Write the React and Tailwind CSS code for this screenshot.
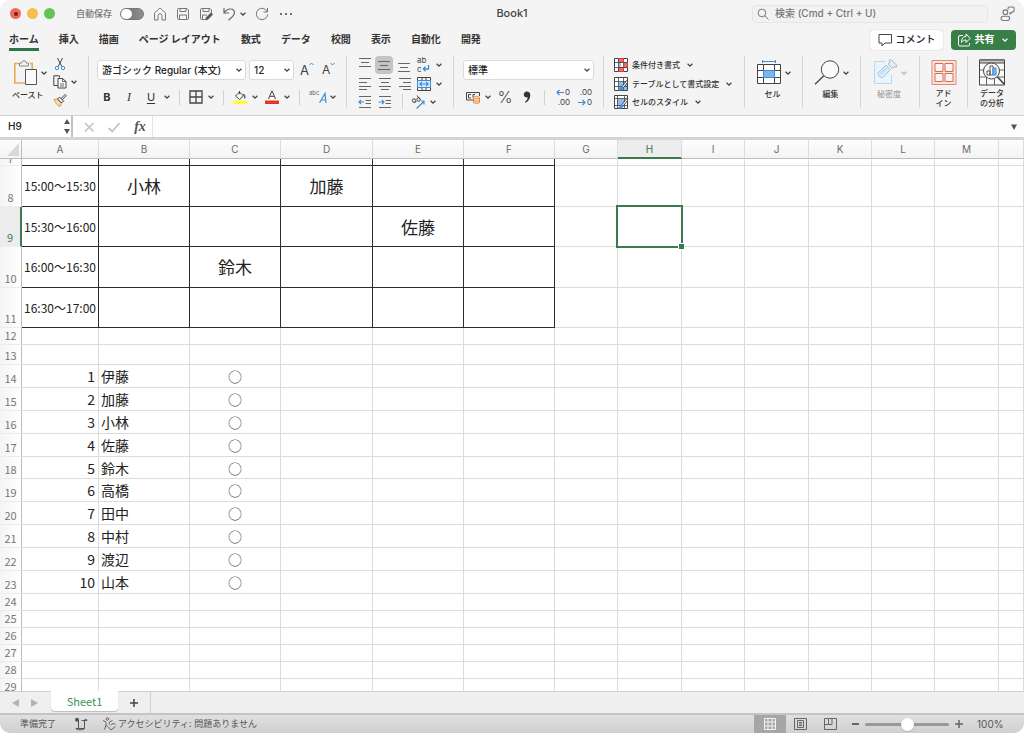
import { useState } from "react";
import clsx from "clsx";

const BLUE = "#3b8ede";
const INK = "#444";

const tabs = ["ホーム", "挿入", "描画", "ページ レイアウト", "数式", "データ", "校閲", "表示", "自動化", "開発"];

const columns = [
  { name: "A", width: "w-[77px]" },
  { name: "B", width: "w-[91px]" },
  { name: "C", width: "w-[91px]" },
  { name: "D", width: "w-[92px]" },
  { name: "E", width: "w-[91px]" },
  { name: "F", width: "w-[91px]" },
  { name: "G", width: "w-[63px]" },
  { name: "H", width: "w-[64px]" },
  { name: "I", width: "w-[63px]" },
  { name: "J", width: "w-[64px]" },
  { name: "K", width: "w-[63px]" },
  { name: "L", width: "w-[63px]" },
  { name: "M", width: "w-[64px]" },
  { name: "", width: "" },
];

const names = ["伊藤", "加藤", "小林", "佐藤", "鈴木", "高橋", "田中", "中村", "渡辺", "山本"];

const rows = [
  { n: 7, h: "h-[7px]", boxed: true, cells: {} },
  { n: 8, h: "h-[41px]", boxed: true, cells: { A: "15:00～15:30", B: "小林", D: "加藤" } },
  { n: 9, h: "h-[40px]", boxed: true, cells: { A: "15:30～16:00", E: "佐藤" } },
  { n: 10, h: "h-[41px]", boxed: true, cells: { A: "16:00～16:30", C: "鈴木" } },
  { n: 11, h: "h-[40px]", boxed: true, cells: { A: "16:30～17:00" } },
  { n: 12, h: "h-[17px]", cells: {} },
  { n: 13, h: "h-[20px]", cells: {} },
  ...names.map((name, i) => ({
    n: 14 + i,
    h: i === 4 ? "h-[22px]" : "h-[23px]",
    cells: { A: i + 1, B: name, C: "○" },
  })),
  ...[24, 25, 26, 27, 28, 29].map((n) => ({ n, h: "h-[17px]", cells: {} })),
];

function Chevron({ color = "#444" }) {
  return (
    <svg viewBox="0 0 12 12" className="h-3 w-3 shrink-0" fill="none" stroke={color} strokeWidth="1.3">
      <path d="M3.6 4.8 6 7.2l2.4-2.4" />
    </svg>
  );
}

function Icon({ size = "h-[14px] w-[14px]", box = "0 0 14 14", children }) {
  return (
    <svg viewBox={box} className={clsx("shrink-0", size)} fill="none" stroke={INK} strokeWidth="1">
      {children}
    </svg>
  );
}

function Split({ label, children }) {
  return (
    <button aria-label={label} className="flex h-5 items-center gap-0.5">
      {children}
      <Chevron />
    </button>
  );
}

function Sep() {
  return <span className="ml-1.5 mr-[9px] h-[15px] w-px bg-[#d2d2d2]" />;
}

function Group({ className, children }) {
  return <section className={clsx("shrink-0 border-r border-[#d6d6d6]", className)}>{children}</section>;
}

function Dropdown({ label, value, className }) {
  return (
    <label className={clsx("relative flex h-5 items-center rounded-[3px] border border-[#dadada] bg-white", className)}>
      <select aria-label={label} className="h-full w-full appearance-none bg-transparent pl-1 text-[10px] font-medium text-[#222] outline-none">
        <option>{value}</option>
      </select>
      <span className="pointer-events-none absolute right-0">
        <Chevron />
      </span>
    </label>
  );
}

function TitleBar() {
  return (
    <header className="grid h-[27px] shrink-0 grid-cols-[1fr_auto_1fr] items-center">
      <div className="flex items-center pl-[10px]">
        <div className="flex gap-1.5">
          <button aria-label="閉じる" className="flex h-[11px] w-[11px] items-center justify-center rounded-full bg-[#ed6a5e]">
            <span className="h-1 w-1 rounded-full bg-[#7d1c14]" />
          </button>
          <button aria-label="しまう" className="h-[11px] w-[11px] rounded-full bg-[#f5bf4f]" />
          <button aria-label="拡大" className="h-[11px] w-[11px] rounded-full bg-[#61c554]" />
        </div>
        <label className="ml-[21px] flex items-center gap-2 text-[9px] font-medium text-[#777]">
          自動保存
          <input type="checkbox" className="peer sr-only" />
          <span className="flex h-3 w-6 items-center rounded-full border border-[#777] bg-linear-to-r from-[#6e6e6e] to-[#8f8f8f]">
            <span className="h-[10px] w-[11px] rounded-full bg-white" />
          </span>
        </label>
        <div className="ml-[9px] flex items-center gap-[9px]">
          <button aria-label="ホーム">
            <Icon>
              <path stroke="#777" d="M1.5 6 7 1l5.5 5v7H9V8.700a2 2 0 0 0-4 0V13H1.5z" strokeLinejoin="round" />
            </Icon>
          </button>
          <button aria-label="保存">
            <Icon>
              <path stroke="#777" d="M1.5 2.5a1 1 0 0 1 1-1H11l1.5 1.5v8.5a1 1 0 0 1-1 1h-9a1 1 0 0 1-1-1zM4 1.500v3h6v-3M3.5 12.500V8h7v4.500" />
            </Icon>
          </button>
          <button aria-label="名前を付けて保存">
            <Icon>
              <path stroke="#777" d="M6 12.500H2.500a1 1 0 0 1-1-1v-9a1 1 0 0 1 1-1H11l1.500 1.500v3M4 1.500v3h6v-3M3.500 12.500V8H8" />
              <path fill="#555" stroke="#555" strokeWidth="0.6" d="m6.500 13 .7-2.600L12 5.800l1.700 1.700-4.600 4.800z" />
            </Icon>
          </button>
          <button aria-label="元に戻す" className="flex items-center">
            <Icon>
              <path stroke="#666" strokeWidth="1.2" d="M2 1v5h5M2.200 5.800C4 3 6 2 8.200 2c2.600 0 4.300 1.500 4.300 3.800 0 2.700-2.500 4.700-6 7.500" />
            </Icon>
            <span className="w-px" />
            <Chevron />
          </button>
          <button aria-label="繰り返し" className="-ml-[3px]">
            <Icon>
              <path stroke="#777" d="M12.500 1v4h-4M12.300 4.800A5.700 5.700 0 1 0 12.700 7.500" />
            </Icon>
          </button>
          <button aria-label="その他" className="flex gap-[3px] pl-0.5">
            <span className="h-0.5 w-0.5 rounded-full bg-[#444]" />
            <span className="h-0.5 w-0.5 rounded-full bg-[#444]" />
            <span className="h-0.5 w-0.5 rounded-full bg-[#444]" />
          </button>
        </div>
      </div>
      <h1 className="text-[11px] font-medium text-[#444]">Book1</h1>
      <div className="flex items-center justify-end gap-3 pr-[9px]">
        <label className="flex h-[18px] w-[236px] items-center gap-1.5 rounded border border-[#e6e6e6] bg-[#f2f2f2] pl-1">
          <Icon size="h-3 w-3">
            <circle cx="5.8" cy="5.8" r="4.500" stroke="#666" />
            <path stroke="#666" d="m9 9 4.500 4.500" />
          </Icon>
          <input
            aria-label="検索"
            placeholder="検索 (Cmd + Ctrl + U)"
            className="w-full bg-transparent text-[10px] font-medium outline-none placeholder:text-[#777]"
          />
        </label>
        <button aria-label="プレゼンス">
          <Icon size="h-[15px] w-[15px]">
            <circle cx="5" cy="5.800" r="2.200" stroke="#777" />
            <rect x="1" y="9.500" width="8" height="4" rx="2" stroke="#777" />
            <path stroke="#777" d="M7.500 3.500V2a1 1 0 0 1 1-1h3.700a1 1 0 0 1 1 1v2.500a1 1 0 0 1-1 1h-.700L9.500 7.500v-2" />
          </Icon>
        </button>
      </div>
    </header>
  );
}

function TabBar() {
  const [active, setActive] = useState("ホーム");
  return (
    <nav className="flex h-[25px] shrink-0 items-center pl-[9px] pr-2">
      <div className="flex flex-1 gap-5">
        {tabs.map((tab) => (
          <button
            key={tab}
            onClick={() => setActive(tab)}
            className={clsx(
              "h-[23px] whitespace-nowrap border-b-[3px] pt-0.5 text-[10px] font-bold leading-4 text-[#333]",
              active === tab ? "border-[#2f7549]" : "border-transparent"
            )}
          >
            {tab}
          </button>
        ))}
      </div>
      <div className="flex gap-2">
        <button className="flex h-5 w-[73px] items-center justify-center gap-1 rounded bg-white text-[10px] font-medium text-[#222] shadow-[0_0_1px_#999]">
          <Icon>
            <path d="M1 1.500h12.500v8.500H7l-3 3v-3H1z" strokeLinejoin="round" />
          </Icon>
          コメント
        </button>
        <button className="flex h-5 w-[65px] items-center justify-center gap-1 rounded bg-[#377e47] text-[10px] font-bold text-white">
          <Icon>
            <path stroke="#fff" d="M6 2.500H3A1.500 1.500 0 0 0 1.500 4v7.500A1.500 1.500 0 0 0 3 13h8a1.500 1.500 0 0 0 1.500-1.500V10" />
            <path stroke="#fff" strokeLinejoin="round" d="M9 1v2.500C6 3.500 4.500 6 4.500 9.500 6 7.500 7 7 9 7v2.500L13.300 5.200z" />
          </Icon>
          共有
          <Chevron color="#fff" />
        </button>
      </div>
    </nav>
  );
}

function ClipboardGroup() {
  return (
    <Group className="flex w-[89px] pl-3">
      <div className="w-9">
        <div className="flex h-[33px] items-center">
          <button aria-label="貼り付け">
            <Icon size="h-[27px] w-[26px]" box="0 0 26 27">
              <path stroke="#eba95c" strokeWidth="1.600" d="M7 4.500H2.800V24H13M18 4.500h2.200V10" />
              <path fill="#f4f4f4" stroke="#888" d="M7.500 7V4h2.300a2 2 0 0 1 4.400 0h2.300v3z" />
              <path fill="#fafafa" stroke="#555" d="M13.500 10.500h11v15h-11z" />
            </Icon>
          </button>
          <Chevron />
        </div>
        <span className="block whitespace-nowrap text-[8px] font-medium leading-3">ペースト</span>
      </div>
      <div className="ml-[5px] flex flex-col gap-0.5">
        <button aria-label="切り取り" className="h-4">
          <Icon>
            <path d="m4.500 1 4.300 8.500M9.500 1 5.200 9.500" />
            <circle cx="4" cy="11" r="1.700" stroke={BLUE} />
            <circle cx="10" cy="11" r="1.700" stroke={BLUE} />
          </Icon>
        </button>
        <button aria-label="コピー" className="flex h-4 items-center gap-px">
          <Icon>
            <path d="M5 10.500H.8V.8h5.700v1.700" />
            <path fill="#fafafa" d="M5 3.500h4.500l3.500 3V13H5z" />
            <path d="M9.500 3.500v3H13M7 9h4M7 11h4" strokeWidth="0.800" />
          </Icon>
          <Chevron />
        </button>
        <button aria-label="書式のコピー" className="h-4">
          <Icon>
            <path stroke="#e8973a" fill="#f9d9b0" d="m1 6.500 3-.5 4.500 4.500L7 13.500C4 12 2 9.500 1 6.500z" />
            <path fill="#f4f4f4" d="m4.500 6 2-2 4 4-2 2z" />
            <path d="m8 5.500 4-4 1.200 1.200-4 4" />
          </Icon>
        </button>
      </div>
    </Group>
  );
}

function FontGroup() {
  return (
    <Group className="w-[258px] pl-2 pt-1">
      <div className="flex items-center">
        <Dropdown label="フォント" value="游ゴシック Regular (本文)" className="w-[149px]" />
        <Dropdown label="フォント サイズ" value="12" className="ml-[3px] w-[45px]" />
        <button aria-label="フォント サイズの拡大" className="ml-1.5 flex text-[13px] leading-5 text-[#444]">
          A
          <Icon size="h-2 w-[5px]" box="0 0 5 8">
            <path stroke={BLUE} d="m.5 5 2-2 2 2" />
          </Icon>
        </button>
        <button aria-label="フォント サイズの縮小" className="ml-2 flex text-[12px] leading-5 text-[#444]">
          A
          <Icon size="h-2 w-[5px]" box="0 0 5 8">
            <path stroke={BLUE} d="m.5 3 2 2 2-2" />
          </Icon>
        </button>
      </div>
      <div className="mt-[7px] flex items-center text-[11px] text-[#333]">
        <button className="w-5 font-bold">B</button>
        <button className="ml-0.5 w-5 font-['Liberation_Serif',serif] text-[12px] italic">I</button>
        <button className="ml-0.5 flex h-5 items-center">
          <span className="w-5 underline underline-offset-2">U</span>
          <Chevron />
        </button>
        <Sep />
        <Split label="罫線">
          <Icon>
            <path strokeWidth="1.300" d="M1 1h12v12H1zM7 1v12M1 7h12" />
          </Icon>
        </Split>
        <Sep />
        <Split label="塗りつぶしの色">
          <Icon>
            <path d="M6.500 1v3M2.500 6 6.500 2l4 4-4 3.500z" />
            <path stroke="#2b6cb8" strokeWidth="1.500" d="M10 4.500c1.500 0 2 1.500 1.700 4" />
            <path fill="#fffb3f" stroke="none" d="M0 10.500h14V14H0z" />
          </Icon>
        </Split>
        <span className="w-1" />
        <Split label="フォントの色">
          <Icon>
            <path d="m3.500 9 3.500-8.200L10.500 9M4.700 6.300h4.600" />
            <path fill="#ea3323" stroke="none" d="M0 10.500h14V14H0z" />
          </Icon>
        </Split>
        <Sep />
        <button aria-label="ふりがな" className="flex h-5 items-center">
          <span className="self-start text-[6px] leading-3 text-[#666]">abc</span>
          <Icon size="h-3 w-2" box="0 0 8 12">
            <path stroke={BLUE} strokeWidth="1.200" d="M.5 12 6 2.500 7 12M2.300 9h4.400" />
          </Icon>
          <Chevron />
        </button>
      </div>
    </Group>
  );
}

function Lines({ d, arrow }) {
  return (
    <Icon>
      <path stroke="#666" strokeWidth="1" d={d} />
      {arrow && <path stroke={BLUE} strokeWidth="1.200" d={arrow} />}
    </Icon>
  );
}

function AlignGroup() {
  return (
    <Group className="w-[107px] pl-2">
      <div className="flex h-[18px] items-center">
        <button aria-label="上揃え" className="flex h-[18px] w-5 items-center justify-center">
          <Lines d="M1 .5h12M3 4.500h8M1 8.500h12" />
        </button>
        <button aria-label="上下中央揃え" className="flex h-[18px] w-[18px] items-center justify-center rounded-sm bg-[#c4c4c4]">
          <Lines d="M1 3.500h12M3 7.500h8M1 11.500h12" />
        </button>
        <button aria-label="下揃え" className="flex h-[18px] w-[22px] items-center justify-center">
          <Lines d="M1 5.500h12M3 9.500h8M1 13.500h12" />
        </button>
        <button aria-label="折り返して全体を表示" className="flex items-center gap-0.5 pl-0.5">
          <span className="w-[14px] text-left text-[8px] text-[#444]">
            <span className="block leading-[9px]">ab</span>
            <span className="flex leading-[9px]">
              c
              <Icon size="h-2 w-2" box="0 0 8 8">
                <path stroke={BLUE} strokeWidth="1.300" d="M6.500 0v4H1.500M3.500 1.800 1.300 4l2.200 2.200" />
              </Icon>
            </span>
          </span>
          <Chevron />
        </button>
      </div>
      <div className="flex h-[18px] items-center pt-px">
        <button aria-label="左揃え" className="w-5 pl-[3px]">
          <Lines d="M1 1.500h12M1 5.500h8M1 9.500h12M1 12.500h8" />
        </button>
        <button aria-label="中央揃え" className="w-5 pl-[3px]">
          <Lines d="M1 1.500h12M3 5.500h8M1 9.500h12M3 12.500h8" />
        </button>
        <button aria-label="右揃え" className="w-5 pl-[3px]">
          <Lines d="M1 1.500h12M5 5.500h8M1 9.500h12M5 12.500h8" />
        </button>
        <span className="w-0.5" />
        <Split label="セルを結合して中央揃え">
          <Icon>
            <path d="M.5.5h13v13H.5zM5 .5v3M9 .5v3M5 10.500v3M9 10.500v3" />
            <path fill="#d6e8f8" stroke={BLUE} d="M.5 3.500h13v7H.5z" />
            <path stroke={BLUE} strokeWidth="1.200" d="M3 7h8M4.800 5 3 7l1.800 2M9.200 5 11 7 9.200 9" />
          </Icon>
        </Split>
      </div>
      <div className="flex h-[18px] items-center pt-px">
        <button aria-label="インデントを減らす" className="w-5 pl-[3px]">
          <Lines d="M1 1.500h12M7.500 5.500H13M7.500 8.500H13M1 12.500h12" arrow="M1 7h5M3 5 1 7l2 2" />
        </button>
        <button aria-label="インデントを増やす" className="w-5 pl-[3px]">
          <Lines d="M1 1.500h12M7.500 5.500H13M7.500 8.500H13M1 12.500h12" arrow="M.5 7H6M4 5l2 2-2 2" />
        </button>
        <span className="ml-[7px] mr-2 h-[15px] w-px bg-[#d2d2d2]" />
        <Split label="方向">
          <Icon>
            <circle cx="3" cy="5.500" r="1.700" />
            <path d="m3.300 8.200 2-2M6 .5l3.300 4" />
            <circle cx="7.500" cy="4.500" r="1.700" />
            <path stroke={BLUE} strokeWidth="1.200" d="m5.500 13.500 7.500-7M9.500 6H13v3.500" />
          </Icon>
        </Split>
      </div>
    </Group>
  );
}

function NumberGroup() {
  return (
    <Group className="w-[150px] pl-[9px] pt-1">
      <Dropdown label="表示形式" value="標準" className="w-[131px]" />
      <div className="mt-[7px] flex items-center pl-[3px]">
        <Split label="通貨">
          <Icon>
            <path d="M13.500 6V2.500H.5V10H7M5 4.500H2.500V8H5M9 4.500H7v3" />
            <path fill="#fbd5b0" stroke="#e8883a" d="M7.500 7.500c0-1.500 6-1.500 6 0v4.700c0 1.500-6 1.500-6 0zM7.500 7.500c0 1.500 6 1.500 6 0M7.500 10c0 1.500 6 1.500 6 0" />
          </Icon>
        </Split>
        <button className="ml-[3px] w-4 text-[16px] font-light leading-5 text-[#444]">%</button>
        <button aria-label="桁区切りスタイル" className="ml-[9px] w-3">
          <Icon size="h-[14px] w-[10px]" box="0 0 10 14">
            <path fill="#333" stroke="none" d="M5 1.500a3 3 0 1 0 .8 5.800C5.500 9.500 4.500 11 2.800 12l.5.700C6.500 11.500 8.300 8.500 8.300 5c0-2.200-1.500-3.500-3.300-3.500z" />
          </Icon>
        </button>
        <span className="ml-[10px] mr-[10px] h-[15px] w-px bg-[#d2d2d2]" />
        <button aria-label="小数点以下の表示桁数を増やす" className="w-[15px] text-right text-[8px] text-[#444]">
          <span className="flex items-center justify-end gap-px leading-[10px]">
            <Icon size="h-[7px] w-2" box="0 0 8 7">
              <path stroke={BLUE} strokeWidth="1.200" d="M8 3.500H1M3.500 1 1 3.500 3.500 6" />
            </Icon>
            0
          </span>
          <span className="block leading-[10px]">.00</span>
        </button>
        <button aria-label="小数点以下の表示桁数を減らす" className="ml-[7px] w-[15px] text-right text-[8px] text-[#444]">
          <span className="block leading-[10px]">.00</span>
          <span className="flex items-center justify-end gap-px leading-[10px]">
            <Icon size="h-[7px] w-2" box="0 0 8 7">
              <path stroke={BLUE} strokeWidth="1.200" d="M0 3.500h7M4.500 1 7 3.500 4.500 6" />
            </Icon>
            0
          </span>
        </button>
      </div>
    </Group>
  );
}

function StylesGroup() {
  return (
    <Group className="w-[141px] pl-[10px]">
      <button className="flex h-[18px] items-center gap-1 text-[8px] font-medium">
        <Icon>
          <path fill="#fff" d="M.5.5h13v13H.5z" />
          <path fill="#ee6a62" stroke="#d6453c" d="M4.500.500h5v4h-5zM4.500 9.500h5v4h-5zM9.500 4.500h4v5h-4z" />
          <path fill="#8dbdea" stroke="none" d="M5 5h2v4H5z" />
          <path d="M.5 4.500h13M.5 9.500h13M4.500.500v13" strokeWidth="0.800" />
        </Icon>
        条件付き書式
        <Chevron />
      </button>
      <button className="flex h-[19px] items-center gap-1 whitespace-nowrap text-[8px] font-medium">
        <Icon>
          <path fill="#fff" d="M.5.5h13v13H.5z" />
          <path fill="#8dbdea" stroke="none" d="M5 5h8v8H5z" />
          <path d="M.5 4.500h13M.5 9.500h13M4.500.500v13M9.500.500v13" strokeWidth="0.800" />
          <path fill="#fff" stroke="#444" d="M12.800 3.500 8 9.500l1.300 1.300L14 5z" />
          <path fill={BLUE} stroke={BLUE} d="M7.500 9.800 9 11.300c-1 1.700-2.500 2-4.500 1.700 1.500-.7 1.500-2.500 3-3.200z" />
        </Icon>
        テーブルとして書式設定
        <Chevron />
      </button>
      <button className="flex h-[18px] items-center gap-1 text-[8px] font-medium">
        <Icon>
          <path fill="#fff" d="M.5.5h13v13H.5z" />
          <path fill="#8dbdea" stroke="none" d="M3.500 3.500h7v7h-7z" />
          <path d="M.5 3.500h13M.5 10.500h13M3.500.500v13M10.500.500v13" strokeWidth="0.800" />
          <path fill="#fff" stroke="#444" d="M12.800 3.500 8 9.500l1.300 1.300L14 5z" />
          <path fill={BLUE} stroke={BLUE} d="M7.500 9.800 9 11.300c-1 1.700-2.500 2-4.500 1.700 1.500-.7 1.500-2.500 3-3.200z" />
        </Icon>
        セルのスタイル
        <Chevron />
      </button>
    </Group>
  );
}

function BigButton({ label, disabled, chevron, children }) {
  return (
    <button
      disabled={disabled}
      className={clsx("flex flex-col items-center text-[8px] font-medium leading-[10px]", disabled && "text-[#a5a5a5]")}
    >
      <span className="flex h-[33px] items-center">
        {children}
        {chevron && <Chevron color={disabled ? "#b5b5b5" : "#444"} />}
      </span>
      <span className={clsx("whitespace-pre-line", chevron && "pr-1")}>{label}</span>
    </button>
  );
}

function Ribbon() {
  return (
    <div className="flex h-[63px] shrink-0 overflow-hidden pb-[7px] pt-1 text-[#333]">
      <ClipboardGroup />
      <FontGroup />
      <AlignGroup />
      <NumberGroup />
      <StylesGroup />
      <Group className="flex w-[58px] justify-center pl-0.5">
        <BigButton label="セル" chevron>
          <Icon size="h-[27px] w-[26px]" box="0 0 26 27">
            <path stroke={BLUE} d="M6.500 2.500h13M6.500 1v3M19.500 1v3" />
            <path fill="#fff" d="M1.500 5.500h23v19h-23z" />
            <path d="M1.500 11.500h23M1.500 18.500h23M7.500 5.500v19M18.500 5.500v19" />
            <path fill="#7fb5e8" stroke={BLUE} d="M7.500 11.500h11v7h-11z" />
          </Icon>
        </BigButton>
      </Group>
      <Group className="flex w-[58px] justify-center pl-0.5">
        <BigButton label="編集" chevron>
          <Icon size="h-[27px] w-[26px]" box="0 0 26 27">
            <circle cx="16" cy="10.500" r="8.700" fill="#fafafa" />
            <path strokeWidth="1.300" d="m9.800 16.800-8.800 8.500" />
          </Icon>
        </BigButton>
      </Group>
      <Group className="flex w-[59px] justify-center pl-0.5">
        <BigButton label="秘密度" chevron disabled>
          <Icon size="h-[27px] w-[26px]" box="0 0 26 27">
            <path stroke="#b9d7ee" fill="#eaf4fb" d="M13 2.500H2.500v22h17V16" />
            <path stroke="#9cc6e6" fill="#d9ebf8" d="m6 14 8-8 4.500 4.500-8 8c-1.500 1.200-5.700-3-4.500-4.500zM8.500 15l6.500-6.500" />
            <path stroke="#a5b8c8" fill="#e3eef6" d="m16 5 2-2-1-1.500 2-1 6 6-1 2-1.500-1-2 2z" />
          </Icon>
        </BigButton>
      </Group>
      <Group className="flex w-12 justify-center">
        <BigButton label={"アド\nイン"}>
          <Icon size="h-[27px] w-[26px]" box="0 0 26 27">
            <path stroke="#df8a76" fill="#fbe3dc" d="M1 1.500h24v24H1z" />
            <path stroke="#d9694f" fill="#f8f4f2" d="M4 4.500h8v8H4zM14 4.500h8v8h-8zM4 14.500h8v8H4zM14 14.500h8v8h-8z" />
          </Icon>
        </BigButton>
      </Group>
      <section className="flex w-12 justify-center">
        <BigButton label={"データ\nの分析"}>
          <Icon size="h-[27px] w-7" box="0 0 28 27">
            <path fill="#fafafa" d="M1.500 1h25v25h-25z" />
            <path fill="#c9c9c9" d="M1.500 1h25v3h-25z" />
            <path d="M1.500 11h25M1.500 18h25M8.500 18v8M16.500 18v8" strokeWidth="0.800" />
            <circle cx="13.500" cy="12" r="8" fill="#fafafa" />
            <path fill="#fff" strokeWidth="0.900" d="M9 12h3v4H9zM12 7h3v9h-3z" />
            <path fill="#7fb5e8" stroke={BLUE} d="M15 9h3v7h-3z" />
            <path strokeWidth="1.600" d="m19.500 18 6.500 7" />
          </Icon>
        </BigButton>
      </section>
    </div>
  );
}

function FormulaBar() {
  return (
    <div className="flex h-[25px] shrink-0 border-b-[3px] border-t border-b-[#d4d4d4] border-t-[#cfcfcf] bg-white">
      <label className="flex w-[73px] items-center border-r-2 border-[#c2c2c2]">
        <input aria-label="名前ボックス" defaultValue="H9" className="w-full bg-transparent pl-2 text-[10px] font-medium text-[#222] outline-none" />
        <Icon size="h-[15px] w-2" box="0 0 8 15">
          <path fill="#555" stroke="none" d="M4 0 7 5H1zM1 10h6l-3 5z" />
        </Icon>
      </label>
      <div className="flex items-center border-r border-[#e3e3e3] pl-[9px] pr-1">
        <button aria-label="キャンセル">
          <Icon>
            <path stroke="#c4c4c4" strokeWidth="1.700" d="m3 3 8.500 8.500M11.500 3 3 11.500" />
          </Icon>
        </button>
        <button aria-label="入力" className="ml-[11px]">
          <Icon>
            <path stroke="#c4c4c4" strokeWidth="1.900" d="m1.500 8 3.800 3.500L12.500 3" />
          </Icon>
        </button>
        <button aria-label="関数の挿入" className="ml-[11px] w-4 font-['Liberation_Serif',serif] text-[14px] font-bold italic leading-4 text-[#555]">
          fx
        </button>
      </div>
      <input aria-label="数式バー" className="min-w-0 flex-1 bg-[#fdfdfd] px-2 text-[11px] outline-none" />
      <button aria-label="数式バーの展開" className="bg-[#fdfdfd] pr-[6px]">
        <Icon size="h-2 w-2" box="0 0 8 8">
          <path fill="#555" stroke="none" d="M1 1.500h6L4 7z" />
        </Icon>
      </button>
    </div>
  );
}

function Cell({ row, col, index }) {
  const value = row.cells[col];
  const boxed = row.boxed && index < 6;
  const selected = row.n === 9 && col === "H";
  return (
    <td
      className={clsx(
        "relative whitespace-nowrap border-b border-r p-0 leading-4",
        boxed ? "border-[#2c2c2c] text-center" : "border-[#dcdcdc]",
        boxed && (index === 0 ? "text-[12px]" : "text-[17px]"),
        !boxed && "text-[14px]",
        !boxed && index === 0 && "pr-[3px] text-right",
        !boxed && index === 1 && "pl-0.5",
        !boxed && index === 2 ? "text-center text-[#444]" : "text-[#222]"
      )}
    >
      {value}
      {selected && (
        <span className="absolute -bottom-0.5 -left-0.5 -right-0.5 -top-0.5 z-10 border-2 border-[#3a7a4e]">
          <span className="absolute -bottom-[3px] -right-[3px] h-[6px] w-[6px] border-l border-t border-white bg-[#3a7a4e]" />
        </span>
      )}
    </td>
  );
}

function Sheet() {
  return (
    <main className="min-h-0 flex-1 overflow-hidden bg-white font-['Noto_Sans_CJK_JP',sans-serif]">
      <table className="w-full table-fixed border-separate border-spacing-0">
        <colgroup>
          <col className="w-[22px]" />
          {columns.map((c) => (
            <col key={c.name} className={c.width} />
          ))}
        </colgroup>
        <thead>
          <tr className="h-[19px] bg-linear-to-b from-[#fdfdfd] to-[#f3f3f3]">
            <th className="border-b border-r border-[#bdbdbd] p-0">
              <svg viewBox="0 0 21 18" className="block h-[18px] w-full">
                <path fill="#d9d9d9" d="M19 3v13H7z" />
              </svg>
            </th>
            {columns.map((c) => (
              <th
                key={c.name}
                className={clsx(
                  "border-r p-0 font-[Inter,sans-serif] text-[10px] font-normal leading-4",
                  c.name === "H"
                    ? "border-b-2 border-b-[#3a7a4e] border-r-[#dcdcdc] bg-[#ededed] text-[#3a7a4e]"
                    : "border-b border-b-[#bdbdbd] border-r-[#dcdcdc] text-[#6c6c6c]"
                )}
              >
                {c.name}
              </th>
            ))}
          </tr>
        </thead>
        <tbody>
          {rows.map((row) => (
            <tr key={row.n} className={row.h}>
              <th
                className={clsx(
                  "border-b border-b-[#ececec] px-0 pt-0 align-bottom text-[11px] font-normal leading-[14px]",
                  row.n === 7 ? "pb-0" : "pb-0.5",
                  row.n === 9
                    ? "border-r-2 border-r-[#3a7a4e] bg-[#ededed] text-[#3a7a4e]"
                    : "border-r border-r-[#bdbdbd] bg-linear-to-r from-[#f4f4f4] to-white text-[#777]"
                )}
              >
                {row.n === 7 ? <span className="flex h-1.5 items-end justify-center overflow-hidden">7</span> : row.n}
              </th>
              {columns.map((c, i) => (
                <Cell key={c.name} row={row} col={c.name} index={i} />
              ))}
            </tr>
          ))}
        </tbody>
      </table>
    </main>
  );
}

function SheetTabs() {
  return (
    <div className="flex h-[22px] shrink-0 border-t border-[#cfcfcf] bg-[#efefef]">
      <div className="flex w-[51px] items-center gap-3 pl-3">
        <button aria-label="前のシート">
          <Icon size="h-2 w-[7px]" box="0 0 7 8">
            <path fill="#b3b3b3" stroke="none" d="M7 0v8L0 4z" />
          </Icon>
        </button>
        <button aria-label="次のシート">
          <Icon size="h-2 w-[7px]" box="0 0 7 8">
            <path fill="#b3b3b3" stroke="none" d="M0 0v8l7-4z" />
          </Icon>
        </button>
      </div>
      <button className="-mt-px h-5 w-[67px] rounded-b-sm bg-white font-['Noto_Sans_CJK_JP',sans-serif] text-[11px] text-[#3f9158] shadow-[0_1px_1px_#bbb]">
        Sheet1
      </button>
      <button aria-label="シートの追加" className="flex w-[33px] items-center justify-center border-r border-[#d0d0d0]">
        <Icon size="h-2 w-2" box="0 0 8 8">
          <path strokeWidth="1.500" d="M4 0v8M0 4h8" />
        </Icon>
      </button>
    </div>
  );
}

function StatusBar() {
  const [zoom, setZoom] = useState(100);
  return (
    <footer className="flex h-5 shrink-0 items-center border-t-2 border-[#c4c4c4] bg-linear-to-b from-[#e0e0e0] to-[#d0d0d0] text-[9px] text-[#555]">
      <span className="pl-5">準備完了</span>
      <button aria-label="マクロの記録" className="ml-[18px]">
        <Icon>
          <path stroke="#555" d="M4.500 3v8.500h6V3.500M4.500 11.500H2M10.500 3.500a1 1 0 0 1 2.500 0H7.500" />
          <path stroke="#555" d="M2 11.500c0 2 8 1.500 8.500 0" />
          <circle cx="3" cy="2.800" r="2" fill="#555" stroke="none" />
        </Icon>
      </button>
      <button className="ml-[14px] flex items-center gap-px">
        <Icon size="h-[14px] w-[15px]" box="0 0 15 14">
          <circle cx="5.500" cy="2" r="1.300" stroke="#666" />
          <path stroke="#666" d="M1 3.500 4 5v3L2.500 12.500M10.500 3.500 7.500 5l-.3 2.500M4 8.500l2 1" />
          <path stroke="#666" d="m6.500 10 2.500 3 4.500-3.500M9 8.500a2.600 2.600 0 0 1 4.500-1" />
        </Icon>
        アクセシビリティ: 問題ありません
      </button>
      <div className="ml-auto flex h-full items-center">
        <button aria-label="標準" className="flex h-full w-8 items-center justify-center bg-[#a6a6a6]">
          <Icon size="h-3 w-3" box="0 0 12 12">
            <path stroke="#f4f4f4" d="M.5.5h11v11H.5zM4 0v12M8 0v12M0 4h12M0 8h12" />
          </Icon>
        </button>
        <button aria-label="ページ レイアウト" className="ml-2">
          <Icon size="h-3 w-[13px]" box="0 0 13 12">
            <path stroke="#666" d="M.5.5h12v11H.5zM3.500 2.500h6v7h-6zM5 4.500h3M5 6h3M5 7.500h3" />
          </Icon>
        </button>
        <button aria-label="改ページ プレビュー" className="ml-[17px]">
          <Icon size="h-3 w-[13px]" box="0 0 13 12">
            <path stroke="#666" d="M.5.5h12v11H.5zM4.500.500v6M.5 6.500h7.500V.500" />
          </Icon>
        </button>
        <button aria-label="縮小" className="ml-[15px] h-[2px] w-[7px] bg-[#666]" />
        <input
          type="range"
          aria-label="ズーム"
          min="0"
          max="200"
          value={zoom}
          onChange={(e) => setZoom(Number(e.target.value))}
          className="mx-1.5 h-[3px] w-[84px] appearance-none rounded bg-[#999] outline-none [&::-webkit-slider-thumb]:h-[13px] [&::-webkit-slider-thumb]:w-[13px] [&::-webkit-slider-thumb]:appearance-none [&::-webkit-slider-thumb]:rounded-full [&::-webkit-slider-thumb]:bg-white [&::-webkit-slider-thumb]:shadow"
        />
        <button aria-label="拡大">
          <Icon size="h-2 w-2" box="0 0 8 8">
            <path stroke="#666" strokeWidth="1.500" d="M4 0v8M0 4h8" />
          </Icon>
        </button>
        <span className="w-[61px] pl-[14px] text-[10px]">{zoom}%</span>
      </div>
    </footer>
  );
}

export default function App() {
  return (
    <div className="flex h-screen flex-col overflow-hidden rounded-[10px] bg-[#f4f4f4] font-[Inter,'Noto_Sans_CJK_JP',sans-serif]">
      <TitleBar />
      <TabBar />
      <Ribbon />
      <FormulaBar />
      <Sheet />
      <SheetTabs />
      <StatusBar />
    </div>
  );
}
